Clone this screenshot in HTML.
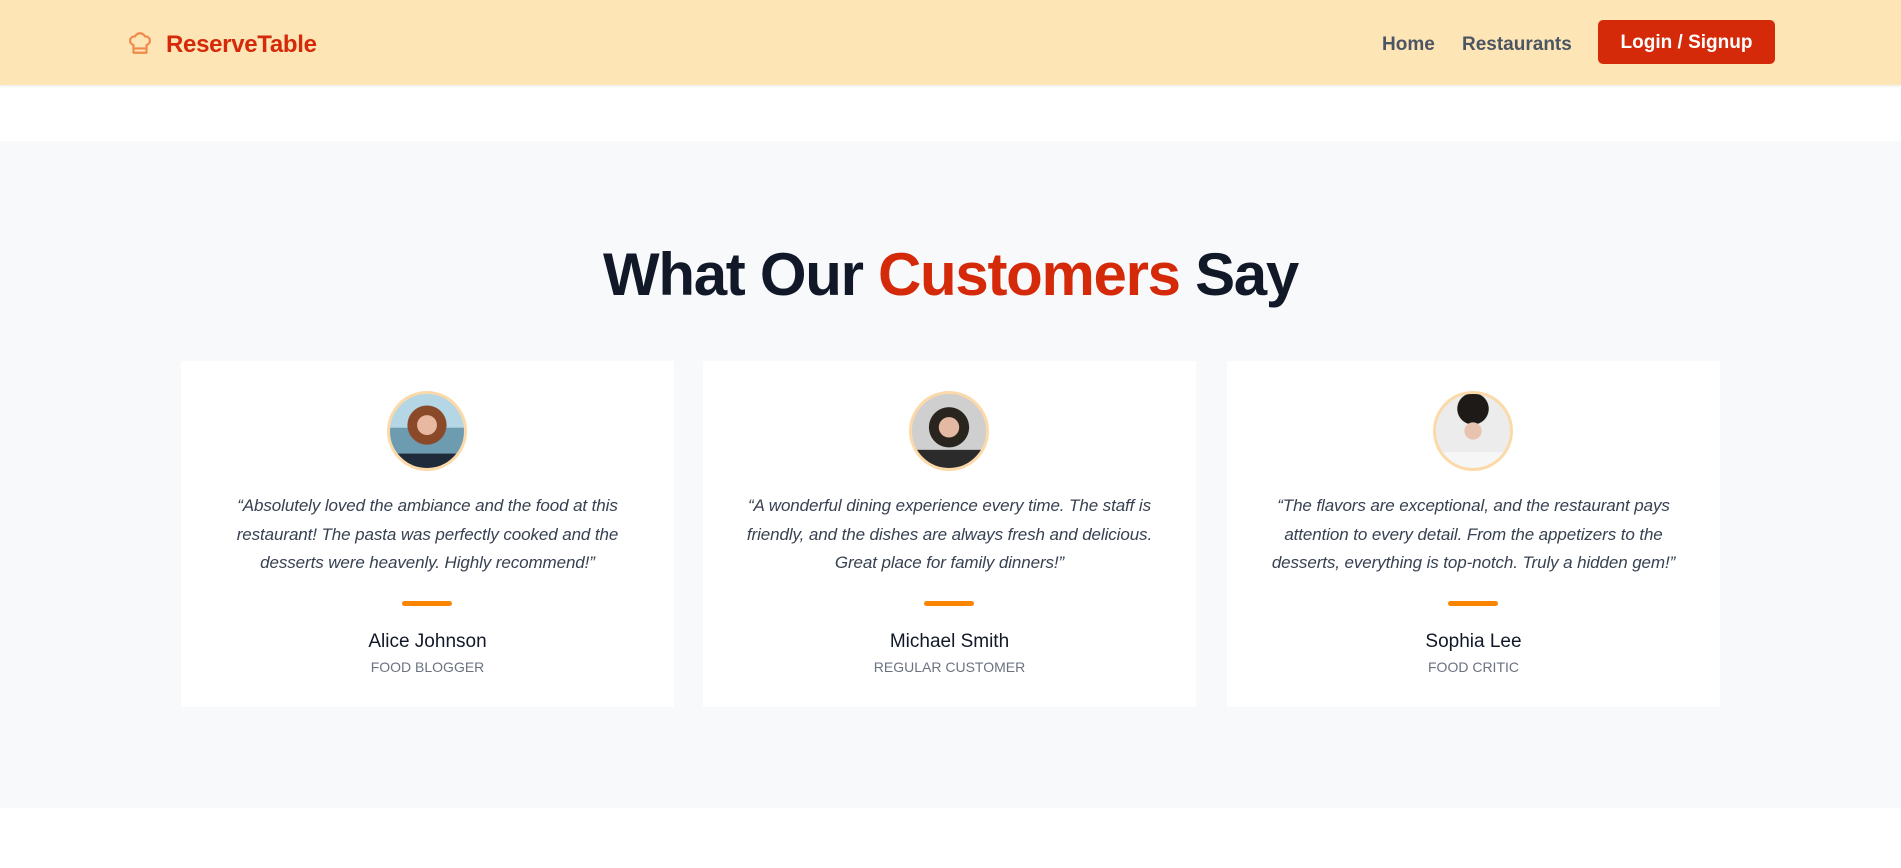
<!DOCTYPE html>
<html><head><meta charset="utf-8"><style>
*{margin:0;padding:0;box-sizing:border-box}
body{width:1901px;height:868px;background:#fff;font-family:"Liberation Sans",sans-serif;position:relative;overflow:hidden}
.hdr{position:absolute;left:0;top:0;width:1901px;height:85px;background:#fee5b5;box-shadow:0 1px 3px rgba(0,0,0,.1)}
.logo{position:absolute;left:166px;top:31px;font-size:24px;font-weight:bold;color:#d52a0a;letter-spacing:-0.3px}
.ic{position:absolute;left:127px;top:30px}
.nav{position:absolute;top:34px;font-size:19px;font-weight:bold;color:#4b5563}
.btn{position:absolute;left:1598px;top:20px;width:177px;height:44px;background:#d52a0a;border-radius:5px;color:#fff;font-size:19px;font-weight:bold;text-align:center;line-height:46px}
.sec{position:absolute;left:0;top:141px;width:1901px;height:667px;background:#f8f9fb}
h2{position:absolute;left:0;top:240px;width:1901px;text-align:center;font-size:60px;font-weight:900;color:#111827;letter-spacing:-1.3px;line-height:70px}
h2 span{color:#d52a0a}
.card{position:absolute;top:361px;width:493px;height:346px;background:#fff;text-align:center}
.av{position:absolute;left:206px;top:30px;width:80px;height:80px;border-radius:50%;border:3px solid #fcd9a8;overflow:hidden}
.q{position:absolute;left:0;top:131px;width:100%;font-size:17px;letter-spacing:-0.1px;font-style:italic;color:#374151;line-height:28.5px;white-space:nowrap}
.bar{position:absolute;left:221px;top:240px;width:50px;height:5px;border-radius:3px;background:#fb8500}
.nm{position:absolute;left:0;top:270px;width:100%;font-size:19px;color:#111827}
.rl{position:absolute;left:0;top:298px;width:100%;font-size:14px;color:#6b7280;text-transform:uppercase}
</style></head><body>
<div class="hdr">
<svg class="ic" width="26" height="26" viewBox="0 0 24 24" fill="none" stroke="#f08a4b" stroke-width="2" stroke-linecap="round" stroke-linejoin="round"><path d="M6 13.87A4 4 0 0 1 7.41 6a5.11 5.11 0 0 1 1.05-1.54 5 5 0 0 1 7.08 0A5.11 5.11 0 0 1 16.59 6 4 4 0 0 1 18 13.87V21H6Z"/><line x1="6" y1="17" x2="18" y2="17"/></svg>
<div class="logo">ReserveTable</div>
<div class="nav" style="left:1382px">Home</div>
<div class="nav" style="left:1462px">Restaurants</div>
<div class="btn">Login / Signup</div>
</div>
<div class="sec"></div>
<h2>What Our <span>Customers</span> Say</h2>

<div class="card" style="left:181px">
<div class="av" style="background:radial-gradient(circle at 50% 42%,#e8b9a0 0 17%,#8a4a2a 18% 34%,transparent 35%),linear-gradient(#b5d6e4 0 45%,#6d9cb0 46% 80%,#1f2a3a 81%)"></div>
<div class="q">“Absolutely loved the ambiance and the food at this<br>restaurant! The pasta was perfectly cooked and the<br>desserts were heavenly. Highly recommend!”</div>
<div class="bar"></div><div class="nm">Alice Johnson</div><div class="rl">Food Blogger</div></div>

<div class="card" style="left:703px">
<div class="av" style="background:radial-gradient(circle at 50% 45%,#e3b9a3 0 18%,#2a241f 19% 36%,transparent 37%),linear-gradient(#cfcfcf 0 75%,#2b2b2b 76%)"></div>
<div class="q">“A wonderful dining experience every time. The staff is<br>friendly, and the dishes are always fresh and delicious.<br>Great place for family dinners!”</div>
<div class="bar"></div><div class="nm">Michael Smith</div><div class="rl">Regular Customer</div></div>

<div class="card" style="left:1227px">
<div class="av" style="background:radial-gradient(circle at 50% 50%,#e8c4b0 0 16%,transparent 17%),radial-gradient(circle at 50% 20%,#1e1a18 0 22%,transparent 23%),linear-gradient(#ececec 0 78%,#f6f6f6 79%)"></div>
<div class="q">“The flavors are exceptional, and the restaurant pays<br>attention to every detail. From the appetizers to the<br>desserts, everything is top-notch. Truly a hidden gem!”</div>
<div class="bar"></div><div class="nm">Sophia Lee</div><div class="rl">Food Critic</div></div>
</body></html>
